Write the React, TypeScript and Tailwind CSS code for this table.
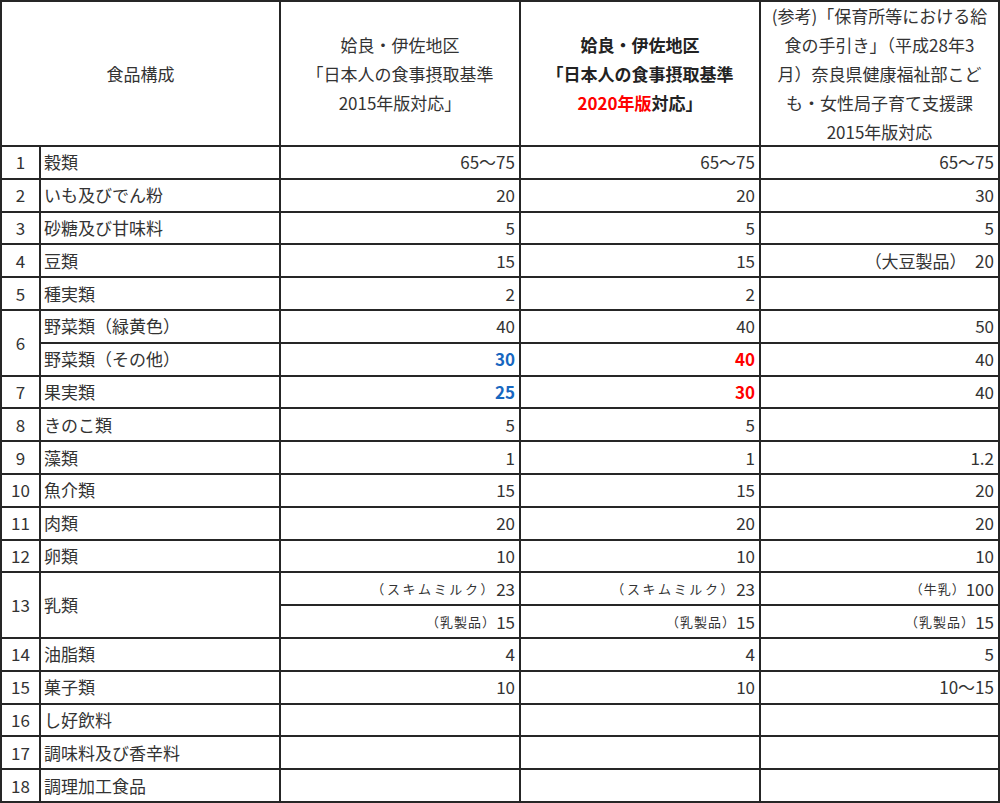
import React from "react";

type V = React.ReactNode;

const FONT = { fontFamily: '"Noto Sans CJK JP", "Noto Sans", sans-serif' };

const Small = ({ children, w }: { children: React.ReactNode; w?: string }) => (
  <span className={w ?? "text-[13px] tracking-[1px]"}>{children}</span>
);

const Blue = ({ children }: { children: React.ReactNode }) => (
  <span className="font-bold text-[#1767c0]">{children}</span>
);
const Red = ({ children }: { children: React.ReactNode }) => (
  <span className="font-bold text-[#ff0000]">{children}</span>
);

type Row = {
  num?: string;
  numSpan?: boolean;
  name?: string;
  nameSpan?: boolean;
  v: [V, V, V];
};

const rows: Row[] = [
  { num: "1", name: "穀類", v: ["65～75", "65～75", "65～75"] },
  { num: "2", name: "いも及びでん粉", v: ["20", "20", "30"] },
  { num: "3", name: "砂糖及び甘味料", v: ["5", "5", "5"] },
  { num: "4", name: "豆類", v: ["15", "15", "（大豆製品）　20"] },
  { num: "5", name: "種実類", v: ["2", "2", ""] },
  { num: "6", numSpan: true, name: "野菜類（緑黄色）", v: ["40", "40", "50"] },
  { name: "野菜類（その他）", v: [<Blue>30</Blue>, <Red>40</Red>, "40"] },
  { num: "7", name: "果実類", v: [<Blue>25</Blue>, <Red>30</Red>, "40"] },
  { num: "8", name: "きのこ類", v: ["5", "5", ""] },
  { num: "9", name: "藻類", v: ["1", "1", "1.2"] },
  { num: "10", name: "魚介類", v: ["15", "15", "20"] },
  { num: "11", name: "肉類", v: ["20", "20", "20"] },
  { num: "12", name: "卵類", v: ["10", "10", "10"] },
  {
    num: "13",
    numSpan: true,
    name: "乳類",
    nameSpan: true,
    v: [
      <>
        <Small w="text-[13px] tracking-[2.6px]">（スキムミルク）</Small>23
      </>,
      <>
        <Small w="text-[13px] tracking-[2.6px]">（スキムミルク）</Small>23
      </>,
      <>
        <Small>（牛乳）</Small>100
      </>,
    ],
  },
  {
    v: [
      <>
        <Small>（乳製品）</Small>15
      </>,
      <>
        <Small>（乳製品）</Small>15
      </>,
      <>
        <Small>（乳製品）</Small>15
      </>,
    ],
  },
  { num: "14", name: "油脂類", v: ["4", "4", "5"] },
  { num: "15", name: "菓子類", v: ["10", "10", "10～15"] },
  { num: "16", name: "し好飲料", v: ["", "", ""] },
  { num: "17", name: "調味料及び香辛料", v: ["", "", ""] },
  { num: "18", name: "調理加工食品", v: ["", "", ""] },
];

export default function App() {
  const cells: React.ReactNode[] = [];
  rows.forEach((r, i) => {
    if (r.num !== undefined) {
      cells.push(
        <div
          key={`n${i}`}
          className={`bg-white flex items-center justify-center pb-[1px] ${r.numSpan ? "row-span-2" : ""}`}
        >
          {r.num}
        </div>
      );
    }
    if (r.name !== undefined) {
      cells.push(
        <div
          key={`m${i}`}
          className={`bg-white flex items-center pl-[3px] pb-[1px] whitespace-nowrap ${r.nameSpan ? "row-span-2" : ""}`}
        >
          {r.name}
        </div>
      );
    }
    r.v.forEach((val, j) => {
      cells.push(
        <div
          key={`v${i}-${j}`}
          className="bg-white flex items-center justify-end pr-[4px] pb-[1px] whitespace-nowrap"
        >
          {val}
        </div>
      );
    });
  });

  return (
    <div className="w-[1000px] h-[803px] overflow-hidden bg-white" style={FONT}>
      <div className="grid w-[1000px] grid-cols-[37px_238px_238px_238px_237px] grid-rows-[143px_repeat(20,30.8px)] gap-[2px] bg-[#262626] p-[2px] text-[17px] text-[#333] leading-none">
        <div className="col-span-2 bg-white flex items-center justify-center">食品構成</div>
        <div className="bg-white flex flex-col items-center justify-center leading-[29px] whitespace-nowrap">
          <span>姶良・伊佐地区</span>
          <span>「日本人の食事摂取基準</span>
          <span>2015年版対応」</span>
        </div>
        <div className="bg-white flex flex-col items-center justify-center leading-[29px] font-bold text-[#222] whitespace-nowrap">
          <span>姶良・伊佐地区</span>
          <span>「日本人の食事摂取基準</span>
          <span>
            <span className="text-[#ff0000]">2020年版</span>対応」
          </span>
        </div>
        <div className="bg-white flex flex-col items-center justify-center leading-[29px] whitespace-nowrap">
          <span>(参考)「保育所等における給</span>
          <span>食の手引き」（平成28年3</span>
          <span>月）奈良県健康福祉部こど</span>
          <span>も・女性局子育て支援課</span>
          <span>2015年版対応</span>
        </div>
        {cells}
      </div>
    </div>
  );
}
